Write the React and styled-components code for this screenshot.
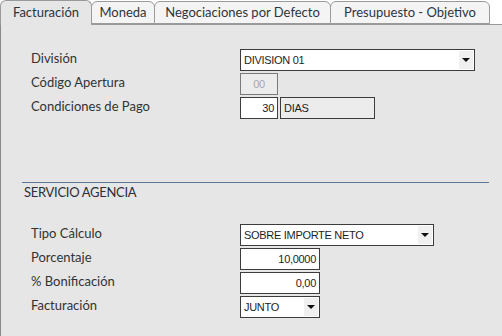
import React from "react";
import styled, { createGlobalStyle } from "styled-components";

const Global = createGlobalStyle`
  html, body { margin: 0; padding: 0; background: #ffffff; }
  body { font-family: Lato, "Noto Sans", sans-serif; color: #333; }
  #root { width: 502px; height: 336px; overflow: hidden; }
`;

const Page = styled.div`
  display: flex;
  flex-direction: column;
  height: 336px;
`;

const TabBar = styled.div`
  display: flex;
  align-items: flex-end;
  height: 24px;
  position: relative;
  z-index: 1;
`;

const Tab = styled.div`
  box-sizing: border-box;
  width: ${(p) => p.$w}px;
  height: ${(p) => (p.$active ? 25 : 23)}px;
  margin-right: -1px;
  border: 1px solid #9a9a9a;
  border-bottom: ${(p) => (p.$active ? "none" : "1px solid #9a9a9a")};
  border-radius: 6px 6px 0 0;
  background: ${(p) => (p.$active ? "#e6e6e6" : "#f4f4f4")};
  margin-bottom: ${(p) => (p.$active ? -1 : 0)}px;
  align-self: flex-end;
  display: flex;
  align-items: center;
  justify-content: center;
  padding-bottom: ${(p) => (p.$active ? 3 : 1)}px;
  font-size: 13px;
  color: #2e3440;
  white-space: nowrap;
`;

const Panel = styled.div`
  flex: 1;
  background: #e6e6e6;
  border-top: 1px solid #9a9a9a;
  border-left: 1px solid #8a8a8a;
  padding: 24px 13px 0 21px;
  display: flex;
  flex-direction: column;
`;

const Form = styled.div`
  display: grid;
  grid-template-columns: 209px 1fr;
  row-gap: 2px;
  padding-left: 9px;
`;

const Label = styled.div`
  font-size: 13px;
  color: #333;
  height: 22px;
  line-height: 18px;
  white-space: nowrap;
`;

const Controls = styled.div`
  display: flex;
  gap: 2px;
`;

const Box = styled.div`
  box-sizing: border-box;
  width: ${(p) => p.$w}px;
  height: 22px;
  border: 1px solid ${(p) => (p.$disabled ? "#7a7a7a" : "#3c3c3c")};
  background: ${(p) => (p.$disabled || p.$readonly ? "#ececec" : "#ffffff")};
  color: ${(p) => (p.$disabled ? "#a8a8a8" : "#1e1e1e")};
  font-family: "Liberation Sans", Arial, sans-serif;
  font-size: 11px;
  letter-spacing: -0.3px;
  display: flex;
  align-items: center;
  justify-content: ${(p) => (p.$right ? "flex-end" : "flex-start")};
  padding: ${(p) => (p.$right ? "0 3px 0 0" : p.$center ? "0" : "0 0 0 3px")};
  ${(p) => p.$center && "justify-content: center;"}
  white-space: nowrap;
  overflow: hidden;
`;

const SelectBox = styled(Box)`
  padding-right: 0;
  align-items: stretch;
`;

const SelectText = styled.span`
  flex: 1;
  display: flex;
  align-items: center;
`;

const Arrow = styled.span`
  width: 14px;
  margin: 1px 1px 1px 0;
  background: #f0f0f0;
  display: flex;
  align-items: center;
  justify-content: center;
  &::after {
    content: "";
    border-left: 4px solid transparent;
    border-right: 4px solid transparent;
    border-top: 4px solid #111;
  }
`;

const Divider = styled.div`
  margin-top: 63px;
  border-top: 1px solid #5b7896;
`;

const SectionTitle = styled.div`
  font-size: 13px;
  color: #2a2f38;
  padding: 1px 0 0 2px;
  height: 40px;
  letter-spacing: -0.3px;
`;

function Select({ w, children }) {
  return (
    <SelectBox $w={w}>
      <SelectText>{children}</SelectText>
      <Arrow />
    </SelectBox>
  );
}

export default function App() {
  return (
    <Page>
      <Global />
      <TabBar>
        <Tab $active $w={92}>Facturación</Tab>
        <Tab $w={64}>Moneda</Tab>
        <Tab $w={177}>Negociaciones por Defecto</Tab>
        <Tab $w={160}>Presupuesto - Objetivo</Tab>
      </TabBar>
      <Panel>
        <Form>
          <Label>División</Label>
          <Controls>
            <Select w={235}>DIVISION 01</Select>
          </Controls>
          <Label>Código Apertura</Label>
          <Controls>
            <Box $w={38} $disabled $center>00</Box>
          </Controls>
          <Label>Condiciones de Pago</Label>
          <Controls>
            <Box $w={38} $right>30</Box>
            <Box $w={95} $readonly>DIAS</Box>
          </Controls>
        </Form>
        <Divider />
        <SectionTitle>SERVICIO AGENCIA</SectionTitle>
        <Form>
          <Label>Tipo Cálculo</Label>
          <Controls>
            <Select w={194}>SOBRE IMPORTE NETO</Select>
          </Controls>
          <Label>Porcentaje</Label>
          <Controls>
            <Box $w={80} $right>10,0000</Box>
          </Controls>
          <Label>% Bonificación</Label>
          <Controls>
            <Box $w={80} $right>0,00</Box>
          </Controls>
          <Label>Facturación</Label>
          <Controls>
            <Select w={80}>JUNTO</Select>
          </Controls>
        </Form>
      </Panel>
    </Page>
  );
}
